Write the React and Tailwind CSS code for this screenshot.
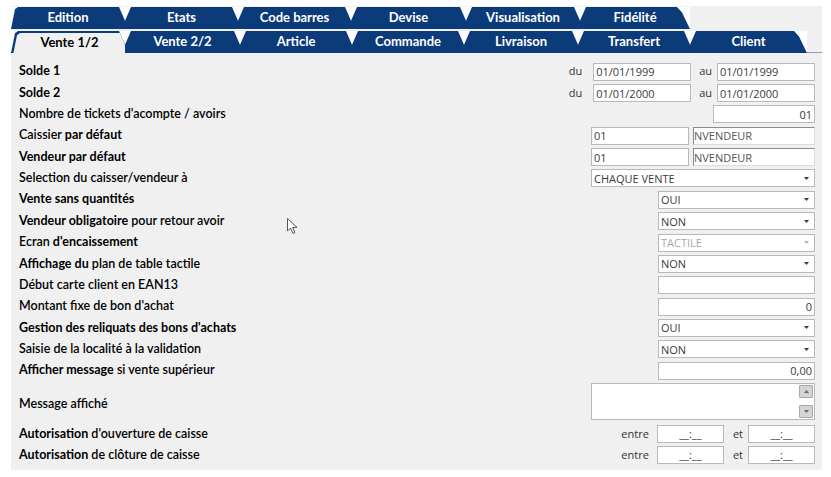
import React from 'react';

const NAVY = 'bg-[#0c3b7a]';

const TOP_TABS = [
  { label: 'Edition', w: 'w-[114px]', pos: 'first' },
  { label: 'Etats', w: 'w-[113px]' },
  { label: 'Code barres', w: 'w-[113px]' },
  { label: 'Devise', w: 'w-[115px]' },
  { label: 'Visualisation', w: 'w-[114px]' },
  { label: 'Fidélité', w: 'w-[110px]', pos: 'last' },
];

const SUB_TABS = [
  { label: 'Vente 1/2', w: 'w-[114px]', pos: 'first', active: true },
  { label: 'Vente 2/2', w: 'w-[115px]' },
  { label: 'Article', w: 'w-[112px]' },
  { label: 'Commande', w: 'w-[112px]' },
  { label: 'Livraison', w: 'w-[114px]' },
  { label: 'Transfert', w: 'w-[112px]' },
  { label: 'Client', w: 'w-[117px]', pos: 'last' },
];

const clipFor = (pos) => {
  if (pos === 'first')
    return '[clip-path:polygon(0_100%,4px_10%,7px_0,calc(100%_-_6px)_0,100%_62%,100%_100%)]';
  if (pos === 'last')
    return '[clip-path:polygon(0_62%,6px_0,calc(100%_-_13px)_0,calc(100%_-_8px)_25%,100%_100%,0_100%)]';
  return '[clip-path:polygon(0_62%,6px_0,calc(100%_-_6px)_0,100%_62%,100%_100%,0_100%)]';
};

function Tab({ tab }) {
  const clip = clipFor(tab.pos);
  if (tab.active) {
    return (
      <div className={`relative h-full ${tab.w} ${NAVY} ${clip}`}>
        <div className="absolute left-[2px] top-[2px] right-[-1px] bottom-[-2px]">
          <div className={`w-full h-full bg-[#f0f0f0] ${clip} flex items-center justify-center text-black`}>
            <span className="mt-[-2px]">{tab.label}</span>
          </div>
        </div>
      </div>
    );
  }
  return (
    <div className={`h-full ${tab.w} ${NAVY} ${clip} flex items-center justify-center text-white`}>
      {tab.label}
    </div>
  );
}

const field = 'h-[18px] bg-white border border-[#b9b9b9] flex items-center px-[2px] text-[11px] text-[#3a3a3a] leading-none';

function Input({ w, value = '', right, center, disabled }) {
  return (
    <div
      className={`${field} ${w} ${right ? 'justify-end' : ''} ${center ? 'justify-center' : ''} ${
        disabled ? 'bg-[#efefef] border-t-[#8a8a8a] border-l-[#8a8a8a] border-r-[#dcdcdc] border-b-[#dcdcdc] pl-0 text-[#555]' : ''
      }`}
    >
      {value}
    </div>
  );
}

function Select({ w, value, disabled }) {
  return (
    <div className={`${field} ${w} justify-between pr-0 ${disabled ? 'text-[#a8a8a8]' : ''}`}>
      <span>{value}</span>
      <span className="w-[16px] h-full flex items-center justify-center">
        <svg width="5" height="3" viewBox="0 0 5 3">
          <path d="M0 0 L5 0 L2.5 3 Z" fill={disabled ? '#b5b5b5' : '#3a3a3a'} />
        </svg>
      </span>
    </div>
  );
}

function Time() {
  return <Input w="w-[67px]" value="__:__" center />;
}

const B = ({ children }) => <span className="font-bold">{children}</span>;

const ROWS = [
  {
    label: <B>Solde 1</B>,
    ctl: (
      <div className="flex items-center">
        <span className="mr-[11px]">du</span>
        <Input w="w-[98px]" value="01/01/1999" />
        <span className="ml-[8px] mr-[5px]">au</span>
        <Input w="w-[98px]" value="01/01/1999" />
      </div>
    ),
  },
  {
    label: <B>Solde 2</B>,
    ctl: (
      <div className="flex items-center">
        <span className="mr-[11px]">du</span>
        <Input w="w-[98px]" value="01/01/2000" />
        <span className="ml-[8px] mr-[5px]">au</span>
        <Input w="w-[98px]" value="01/01/2000" />
      </div>
    ),
  },
  { label: <>Nombre de tickets d'acompte / avoirs</>, ctl: <Input w="w-[102px]" value="01" right /> },
  {
    label: <>Caissier <B>par défaut</B></>,
    ctl: (
      <div className="flex gap-[4px]">
        <Input w="w-[98px]" value="01" />
        <Input w="w-[122px]" value="NVENDEUR" disabled />
      </div>
    ),
  },
  {
    label: <B>Vendeur par défaut</B>,
    ctl: (
      <div className="flex gap-[4px]">
        <Input w="w-[98px]" value="01" />
        <Input w="w-[122px]" value="NVENDEUR" disabled />
      </div>
    ),
  },
  { label: <>Selection du caisser/vendeur à</>, ctl: <Select w="w-[224px]" value="CHAQUE VENTE" /> },
  { label: <B>Vente sans quantités</B>, ctl: <Select w="w-[157px]" value="OUI" /> },
  { label: <><B>Vendeur obligatoire</B> pour retour avoir</>, ctl: <Select w="w-[157px]" value="NON" /> },
  { label: <>Ecran <B>d'encaissement</B></>, ctl: <Select w="w-[157px]" value="TACTILE" disabled /> },
  { label: <><B>Affichage du</B> plan de table tactile</>, ctl: <Select w="w-[157px]" value="NON" /> },
  { label: <>Début carte client en EAN13</>, ctl: <Input w="w-[157px]" /> },
  { label: <>Montant fixe de bon d'achat</>, ctl: <Input w="w-[157px]" value="0" right /> },
  { label: <B>Gestion des reliquats des bons d'achats</B>, ctl: <Select w="w-[157px]" value="OUI" /> },
  { label: <>Saisie de la localité à la validation</>, ctl: <Select w="w-[157px]" value="NON" /> },
  { label: <><B>Afficher message</B> si vente supérieur</>, ctl: <Input w="w-[157px]" value="0,00" right /> },
];

function ScrollBtn({ up }) {
  return (
    <div className="w-[14px] h-[13px] bg-[#d4d4d4] border border-[#a9a9a9] rounded-[1px] flex items-center justify-center">
      <svg width="5" height="3" viewBox="0 0 5 3">
        <path d={up ? 'M0 3 L5 3 L2.5 0 Z' : 'M0 0 L5 0 L2.5 3 Z'} fill="#6a6a6a" />
      </svg>
    </div>
  );
}

export default function App() {
  return (
    <div className="w-[831px] h-[477px] bg-white relative font-['Lato',sans-serif]">
      <div className="absolute left-[11px] top-[6px] w-[811px] h-[464px] bg-[#f0f0f0] flex flex-col">
        {/* top tab row */}
        <div className="flex h-[22px] mt-[1px] w-fit bg-white text-[13px] font-bold">
          {TOP_TABS.map((t) => (
            <Tab key={t.label} tab={t} />
          ))}
        </div>
        {/* sub tab row */}
        <div className="flex items-end h-[22px] mt-[2px]">
          <div className="flex h-full w-fit bg-white text-[13px] font-bold">
            {SUB_TABS.map((t) => (
              <Tab key={t.label} tab={t} />
            ))}
          </div>
          <div className="flex-1 h-[1px] bg-[#8b9bb8]" />
        </div>

        {/* form */}
        <div className="flex flex-col pl-[8px] pr-[7px] pt-[8px] text-[12.5px] font-semibold text-black">
          {ROWS.map((r, i) => (
            <div key={i} className="h-[21.36px] flex items-center justify-between">
              <div>{r.label}</div>
              <div className="flex items-center text-[11px] font-['Open_Sans',sans-serif] font-normal text-[#333]">
                {r.ctl}
              </div>
            </div>
          ))}
          <div className="h-[42px] flex items-center justify-between">
            <div className="mt-[3px]">Message affiché</div>
            <div className="w-[224px] h-[37px] mt-[-2px] bg-white border border-[#b9b9b9] flex justify-end p-[1px]">
              <div className="flex flex-col justify-between">
                <ScrollBtn up />
                <ScrollBtn />
              </div>
            </div>
          </div>
          {['d\'ouverture de caisse', 'de clôture de caisse'].map((t) => (
            <div key={t} className="h-[21px] flex items-center justify-between">
              <div>
                <B>Autorisation</B> {t}
              </div>
              <div className="flex items-center text-[11px] font-['Open_Sans',sans-serif] font-normal text-[#333]">
                <span className="mr-[8px]">entre</span>
                <Time />
                <span className="ml-[9px] mr-[5px]">et</span>
                <Time />
              </div>
            </div>
          ))}
        </div>
      </div>

      {/* mouse pointer */}
      <svg className="absolute left-[287px] top-[218px]" width="12" height="17" viewBox="0 0 12 17">
        <path d="M0.5 0.5 L0.5 13 L3.5 10 L6 15.5 L8 14.5 L5.6 9.4 L10 9.4 Z" fill="#fff" stroke="#555" strokeWidth="1" strokeLinejoin="round" />
      </svg>
    </div>
  );
}
